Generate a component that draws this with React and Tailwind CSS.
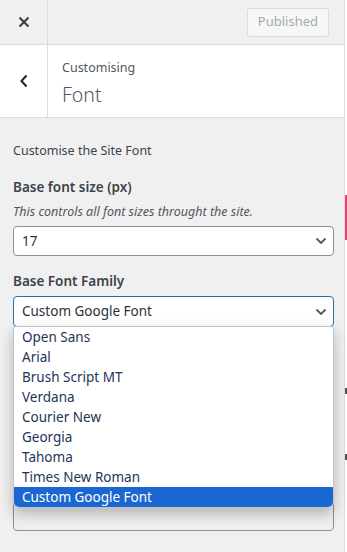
import React from "react";

const fonts = [
  "Open Sans",
  "Arial",
  "Brush Script MT",
  "Verdana",
  "Courier New",
  "Georgia",
  "Tahoma",
  "Times New Roman",
  "Custom Google Font",
];

const Chevron = () => (
  <svg width="12" height="8" viewBox="0 0 12 8" fill="none">
    <path d="M1.5 1.5 6 6l4.5-4.5" stroke="#50575e" strokeWidth="1.8" />
  </svg>
);

export default function App() {
  return (
    <div
      className="flex h-[552px] w-[347px] overflow-hidden bg-white"
      style={{ fontFamily: '"Noto Sans", "Open Sans", sans-serif' }}
    >
      <div className="flex w-[345px] flex-col border-r border-[#dcdcde] bg-[#f0f0f1]">
        {/* top bar */}
        <div className="flex h-[45px] shrink-0 border-b border-[#dcdcde]">
          <div className="flex w-[48px] items-center justify-center border-r border-[#dcdcde]">
            <svg width="12" height="12" viewBox="0 0 12 12">
              <path d="M1.5 1.5l9 9M10.5 1.5l-9 9" stroke="#3c434a" strokeWidth="2.2" />
            </svg>
          </div>
          <div className="flex flex-1 items-center justify-end pr-[15px]">
            <div className="flex h-[29px] items-center rounded-[3px] border border-[#dcdcde] bg-[#f6f7f7] px-[10px] text-[13px] text-[#a7aaad]">
              Published
            </div>
          </div>
        </div>

        {/* section header */}
        <div className="flex h-[73px] shrink-0 border-b border-[#dcdcde] bg-white">
          <div className="flex w-[48px] items-center justify-center border-r border-[#dcdcde]">
            <svg width="10" height="14" viewBox="0 0 10 14">
              <path d="M7.5 1.5 2.5 7l5 5.5" stroke="#1d2327" strokeWidth="2" fill="none" />
            </svg>
          </div>
          <div className="flex flex-col pl-[14px] pt-[14px]">
            <span className="text-[12.5px] leading-[18px] text-[#50575e]">Customising</span>
            <span className="mt-[5px] text-[19.5px] font-light leading-[26px] text-[#50575e]">Font</span>
          </div>
        </div>

        {/* body */}
        <div className="relative flex flex-col pl-[13px] pt-[24px]">
          <p className="text-[12.5px] leading-[18px] text-[#3c434a]">Customise the Site Font</p>

          <p className="mt-[17px] text-[13.5px] font-semibold leading-[20px] text-[#3c434a]">
            Base font size (px)
          </p>
          <p className="mt-[6px] text-[12.5px] italic leading-[18px] text-[#50575e]">
            This controls all font sizes throught the site.
          </p>
          <div className="mt-[5px] flex h-[30px] w-[321px] items-center justify-between rounded-[4px] border border-[#8c8f94] bg-white pl-[8px] pr-[6px]">
            <span className="text-[13.5px] text-[#2c3338]">17</span>
            <Chevron />
          </div>

          <p className="mt-[15px] text-[13.5px] font-semibold leading-[20px] text-[#3c434a]">
            Base Font Family
          </p>
          <div className="mt-[5px] flex h-[31px] w-[321px] items-center justify-between rounded-[4px] border-[1.5px] border-[#2271b1] bg-white pl-[8px] pr-[6px]">
            <span className="text-[13.5px] text-[#2c3338]">Custom Google Font</span>
            <Chevron />
          </div>

          {/* field hidden behind the open list */}
          <div className="mt-[10px] flex flex-col">
            <div className="ml-0 h-[8px] w-[3px] bg-[#a86a32]" />
            <div className="mt-[20px] h-[30px] w-[321px] rounded-[4px] border border-[#8c8f94]" />
            <div className="mt-[26px] h-[8px] w-[3px] bg-[#a86a32]" />
            <div className="mt-[24px] h-[8px] w-[3px] bg-[#a86a32]" />
            <div className="mt-[24px] h-[46px] w-[321px] rounded-[4px] border border-[#8c8f94] bg-[#f0f0f1]" />
          </div>

          {/* open dropdown list */}
          <div className="absolute left-[13px] top-[208px] w-[321px] overflow-hidden rounded-b-[6px] rounded-t-[3px] border border-[#c3c4c7] bg-white shadow-[0_6px_14px_rgba(0,0,0,0.25)]">
            {fonts.map((f) => (
              <div
                key={f}
                className={
                  f === "Custom Google Font"
                    ? "h-[20px] bg-[#1a67d2] pl-[8px] text-[13.5px] leading-[20px] text-white"
                    : "h-[20px] pl-[8px] text-[13.5px] leading-[20px] text-[#1d3557]"
                }
              >
                {f}
              </div>
            ))}
          </div>
        </div>
      </div>
      <div className="relative flex-1 bg-white">
        <div className="absolute left-0 top-[195px] h-[45px] w-full bg-[#e0457b]" />
        <div className="absolute left-0 top-[388px] h-[6px] w-full bg-[#555]" />
        <div className="absolute left-0 top-[454px] h-[6px] w-full bg-[#555]" />
      </div>
    </div>
  );
}
